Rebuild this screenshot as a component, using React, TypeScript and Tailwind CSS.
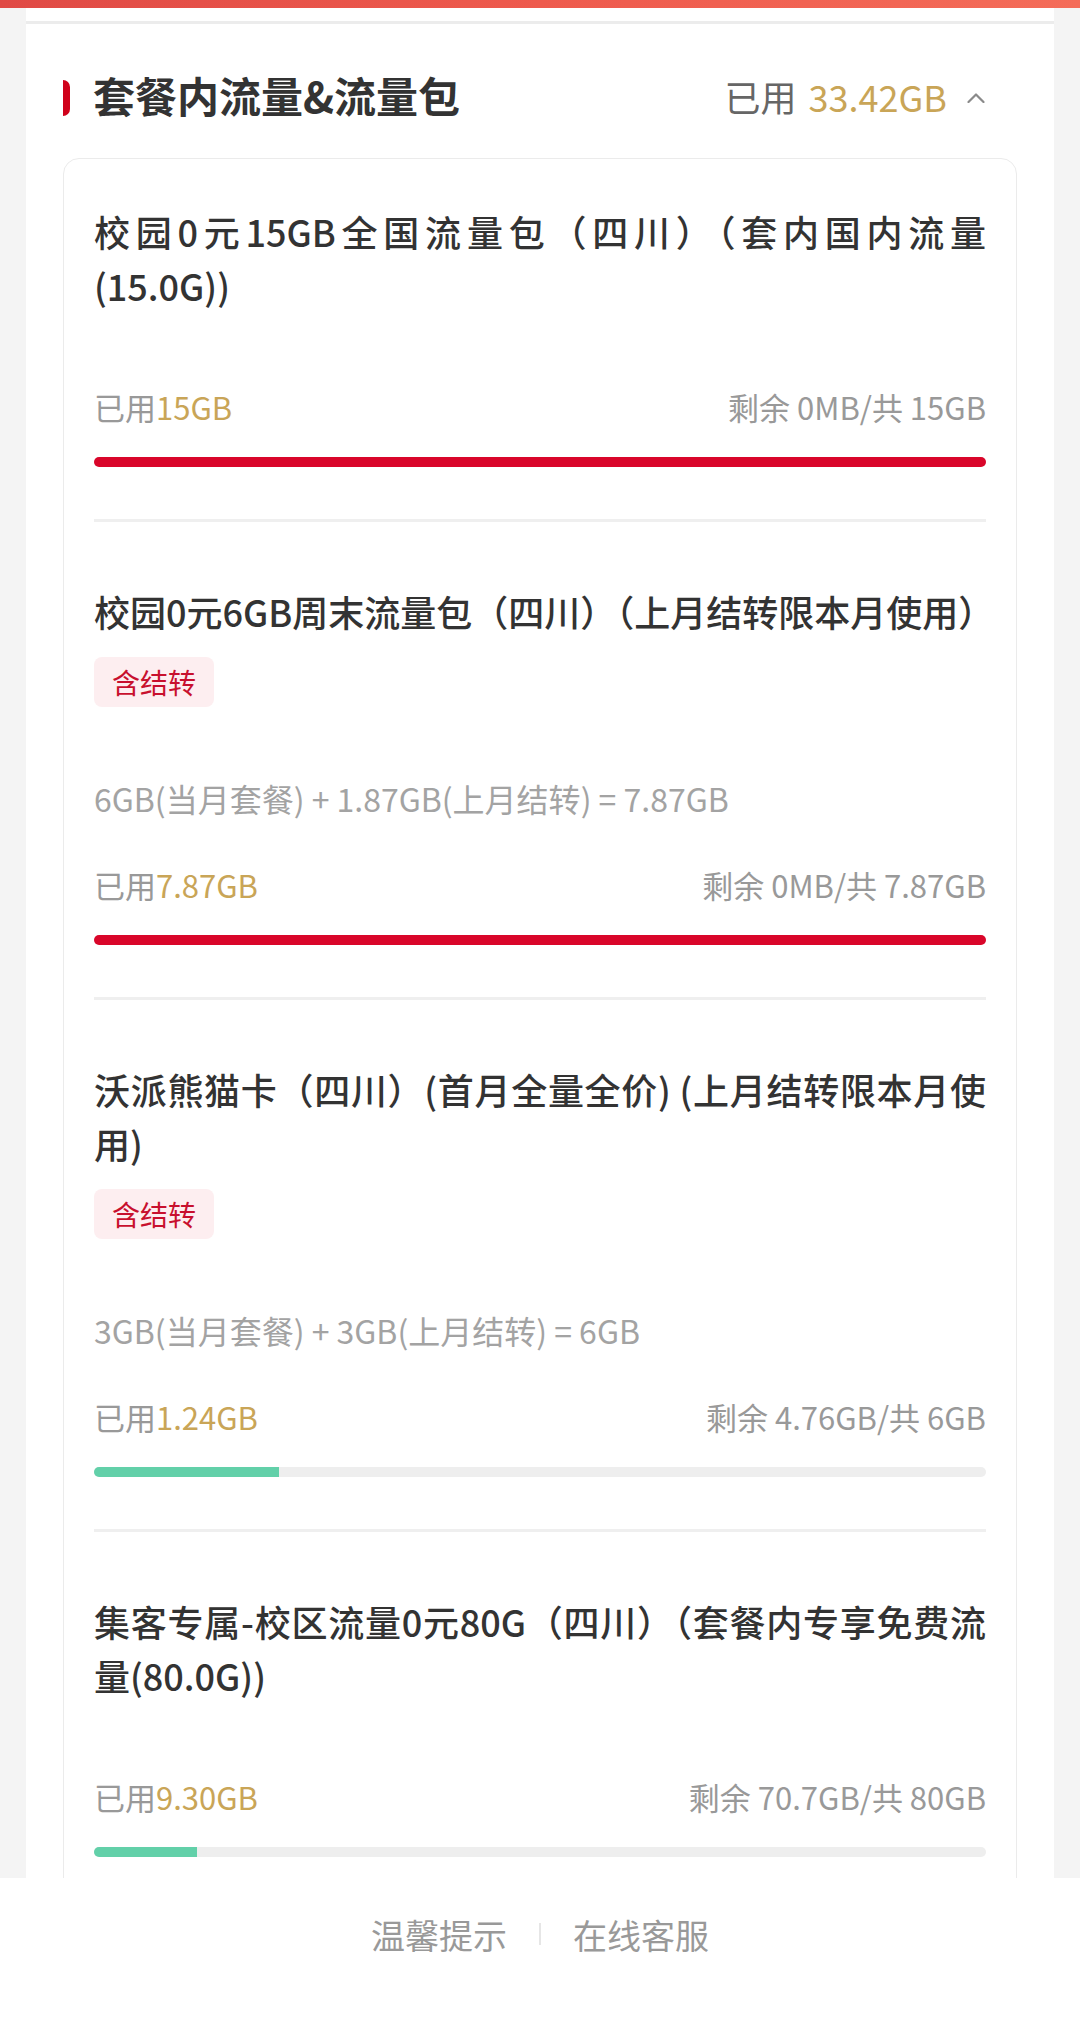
import React from "react";

type Pack = {
  lines: string[];
  carry?: boolean;
  formula?: string;
  used: string;
  rest: string;
  pct: number;
};

const packs: Pack[] = [
  {
    lines: ["校园0元15GB全国流量包（四川）（套内国内流量", "(15.0G))"],
    used: "15GB",
    rest: "剩余 0MB/共 15GB",
    pct: 100,
  },
  {
    lines: ["校园0元6GB周末流量包（四川）（上月结转限本月使用）"],
    carry: true,
    formula: "6GB(当月套餐) + 1.87GB(上月结转) = 7.87GB",
    used: "7.87GB",
    rest: "剩余 0MB/共 7.87GB",
    pct: 100,
  },
  {
    lines: ["沃派熊猫卡（四川）(首月全量全价) (上月结转限本月使", "用)"],
    carry: true,
    formula: "3GB(当月套餐) + 3GB(上月结转) = 6GB",
    used: "1.24GB",
    rest: "剩余 4.76GB/共 6GB",
    pct: 20.7,
  },
  {
    lines: ["集客专属-校区流量0元80G（四川）（套餐内专享免费流", "量(80.0G))"],
    used: "9.30GB",
    rest: "剩余 70.7GB/共 80GB",
    pct: 11.6,
  },
];

const PackItem = ({ pack, first }: { pack: Pack; first: boolean }) => {
  const full = pack.pct >= 100;
  return (
    <div className={first ? "pt-[45px] pb-[52px]" : "border-t-[3px] border-[#efefef] pt-[62px] pb-[52px]"}>
      <div className="text-[36px] font-medium leading-[54px] text-[#333]">
        {pack.lines.map((line, i) => (
          <span
            key={i}
            className={
              i < pack.lines.length - 1
                ? "block text-justify [text-align-last:justify]"
                : "block"
            }
          >
            {line}
          </span>
        ))}
      </div>

      {pack.carry && (
        <div className="mt-[19px] inline-flex h-[50px] items-center rounded-[8px] bg-[#fdeef0] px-[18px] text-[28px] text-[#c8102e]">
          含结转
        </div>
      )}

      {pack.formula && (
        <div className="mt-[69px] h-[44px] text-[32px] leading-[44px] text-[#a3a3a3]">
          {pack.formula}
        </div>
      )}

      <div
        className={
          (pack.formula ? "mt-[43px]" : "mt-[73px]") +
          " flex h-[44px] items-center justify-between text-[31px] leading-[44px]"
        }
      >
        <span className="text-[#999]">
          已用<span className="text-[#c9a557]">{pack.used}</span>
        </span>
        <span className="text-[#999]">{pack.rest}</span>
      </div>

      <div className="mt-[28px] h-[10px] overflow-hidden rounded-full bg-[#eeeeee]">
        <div
          className={full ? "h-full bg-[#d9062a]" : "h-full bg-[#62d0a9]"}
          style={{ width: `${pack.pct}%` }}
        />
      </div>
    </div>
  );
};

const App = () => {
  return (
    <div className="flex h-[2034px] w-[1080px] flex-col overflow-hidden bg-[#f4f4f4] font-['Noto_Sans_CJK_SC','Noto_Sans',sans-serif]">
      <div className="h-2 shrink-0 bg-gradient-to-r from-[#e04a45] via-[#ee5a4d] to-[#f46c59]" />

      <div className="min-h-0 flex-1 overflow-hidden">
        <div className="mx-[26px] h-[13px] bg-white" />

        <section className="mx-[26px] border-t-[3px] border-[#ececec] bg-white px-[37px] pt-[46px]">
          <header className="flex h-[56px] items-center justify-between pr-[32px]">
            <div className="flex items-center gap-[23px]">
              <span className="h-[36px] w-[7px] rounded-r-full bg-[#d0021b]" />
              <h2 className="mb-[7px] text-[42px] font-bold text-[#333]">套餐内流量&amp;流量包</h2>
            </div>
            <div className="flex items-center text-[36px]">
              <span className="mb-[4px] text-[#666]">已用</span>
              <span className="mb-[4px] ml-[12px] text-[#c9a557]">33.42GB</span>
              <svg width="18" height="10" viewBox="0 0 18 10" className="ml-[20px]">
                <polyline points="1.5,9 9,1.5 16.5,9" fill="none" stroke="#8a8a8a" strokeWidth="2.2" strokeLinecap="round" strokeLinejoin="round" />
              </svg>
            </div>
          </header>

          <div className="mt-[32px] rounded-[16px] border border-[#ebebeb] bg-white px-[30px]">
            {packs.map((p, i) => (
              <PackItem key={i} pack={p} first={i === 0} />
            ))}
          </div>
        </section>
      </div>

      <footer className="flex h-[156px] shrink-0 justify-center bg-white pt-[32px]">
        <div className="flex h-[48px] items-center text-[34px] text-[#999]">
          <span>温馨提示</span>
          <span className="mx-[32px] h-[22px] w-[2px] bg-[#e6e6e6]" />
          <span>在线客服</span>
        </div>
      </footer>
    </div>
  );
};

export default App;
